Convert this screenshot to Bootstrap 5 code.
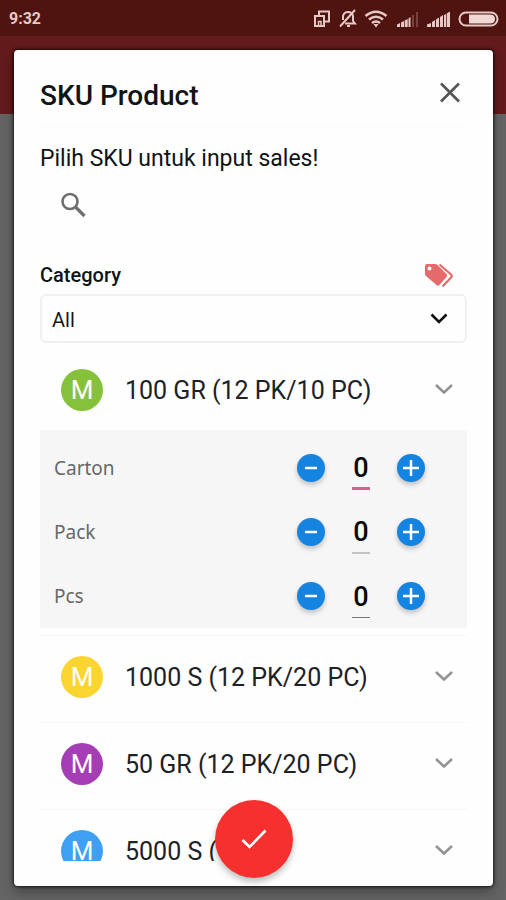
<!DOCTYPE html>
<html lang="id">
<head>
<meta charset="utf-8">
<meta name="viewport" content="width=device-width, initial-scale=1">
<title>SKU Product</title>
<link href="https://cdn.jsdelivr.net/npm/bootstrap@5.3.0/dist/css/bootstrap.min.css" rel="stylesheet">
<style>
  body { font-family: Roboto, "Liberation Sans", sans-serif; color: #101417; background: #646464; }
  .status-bar { height: 36px; background: #4f1410; color: #e6c9c5; font-size: 16px; font-weight: 700; padding: 2px 7px 0 9px; }
  .status-icons { gap: 7px; }
  .backdrop-area { background: linear-gradient(#621a1b 78px, #646464 78px); padding: 14px 13px 14px 14px; min-height: 0; }
  .sku-dialog { border-radius: 4px; background: #fefefe; box-shadow: 0 0 3px 1px #000000b0, 0 6px 12px #00000050; padding: 0 26px 25px; }
  .sku-head { height: 77px; padding: 16px 5px 0 0; border-bottom: 1px solid #fafafa; }
  .sku-title { font-size: 28px; line-height: 32px; font-weight: 500; }
  .intro { font-size: 23px; line-height: 28px; margin-top: 18px; }
  .search-row { height: 40px; margin: 12px 0 35px; padding-left: 20px; gap: 14px; }
  .search-input:focus { outline: none; }
  .cat-label { font-size: 20px; line-height: 24px; font-weight: 500; }
  .cat-row { height: 30px; margin-bottom: 4px; padding-right: 13px; }
  .cat-select { height: 49px; border: 2px solid #f0f0f0; border-radius: 6px; padding: 2px 10px 0; font-size: 20px; color: #15191c; background-color: #fefefe; background-size: 20px 20px; background-position: right 16px center;
    background-image: url("data:image/svg+xml,%3Csvg xmlns='http://www.w3.org/2000/svg' viewBox='0 0 20 20'%3E%3Cpath d='M2.500 5.500L10 13L17.500 5.500' fill='none' stroke='%23111' stroke-width='2.600'/%3E%3C/svg%3E"); }
  .sku-list { min-height: 0; }
  .sku-item { height: 87px; border: 0; border-top: 1px solid #f6f6f6; padding: 0 13px 4px 21px; gap: 22px; font-size: 25px; line-height: 32px; color: #1c2226; }
  .sku-item.open { padding-top: 7px; padding-bottom: 0; border-top: 0; }
  .sku-name { padding-top: 2px; }
  .sku-avatar { width: 42px; height: 42px; font-size: 26px; color: #fff; }
  .green { background: #86c13c; } .yellow { background: #fbd52f; } .purple { background: #a53db5; } .blue { background: #3f9ff0; }
  .qty-panel { background: #f6f6f6; padding: 6px 42px 0 14px; height: 198px; margin-bottom: 7px; }
  .qty-row { height: 64px; }
  .qty-label { font-family: "Noto Sans", sans-serif; font-size: 19px; color: #686868; }
  .qty-controls { gap: 27px; }
  .qty-btn { width: 28px; height: 28px; background: #1583e0; box-shadow: 0 3px 5px #00000038; }
  .qty-input { width: 18px; height: 44px; padding: 2px 0 0; border: 0; border-bottom: 2px solid #c4c4c4; background: transparent; font-size: 27px; font-weight: 500; color: #080808; text-align: center; }
  .qty-input:focus { outline: none; }
  .qty-input.active-line { border-bottom: 3px solid #d4628c; }
  .qty-input.dark-line { border-bottom: 1px solid #777; }
  .fab { width: 78px; height: 78px; bottom: 8px; left: 50%; transform: translateX(-50%); background: #f6302f; box-shadow: 0 4px 6px #00000040; }
</style>
</head>
<body class="vh-100 d-flex flex-column overflow-hidden">
<header class="status-bar d-flex align-items-center justify-content-between flex-shrink-0">
  <span>9:32</span>
  <div class="status-icons d-flex align-items-center">
    <svg width="18" height="20" viewBox="0 0 18 20" fill="none" stroke="#e6c9c5" stroke-width="2"><path d="M6 6V2.500h10v10h-4"/><path d="M2 7h9v10H2z"/><path d="M5.500 17v-4.500h2.500V17" stroke-width="1.500"/></svg>
    <svg width="19" height="20" viewBox="0 0 19 20" fill="none" stroke="#e6c9c5" stroke-width="2"><path d="M5 11V7q1-4 5-4 4 0 5 4v5l2 2.500H7"/><path d="M9 17h3M17 1L2 17.500"/></svg>
    <svg width="24" height="20" viewBox="0 0 24 20" fill="none" stroke="#e6c9c5" stroke-width="2.600"><path d="M1.500 7q10.500-8.500 21 0M5 10.500q7-5.500 14 0M8 14q4-3 8 0"/><path d="M9.500 15h5L12 18.500z" fill="#e6c9c5" stroke="none"/></svg>
    <svg width="24" height="20" viewBox="0 0 24 20" fill="#e6c9c5"><path d="M2 15.500L5 14v4H2zM6 13.500L9 12v6H6zM9.700 11.500l3-1.500v8h-3zM13.500 9.500L15.500 8v10h-2z"/><path d="M17 6h2v12h-2zM21 3h2v15h-2z" opacity=".25"/></svg>
    <svg width="25" height="20" viewBox="0 0 25 20" fill="#e6c9c5"><path d="M1 15.500L5 14v4H1zM6 13l3-2v7H6zM10 10.500l3-2V18h-3zM14 8l3-2v12h-3zM18 6l2-1v13h-2zM20.700 4.500L24 2.500V18h-3.300z"/></svg>
    <svg width="41" height="16" viewBox="0 0 41 16"><rect x="1.500" y="1.500" width="38" height="13" rx="6.500" fill="none" stroke="#e6c9c5" stroke-width="2"/><path d="M11 3.500h21q5 0 5 4.500t-5 4.500H11z" fill="#f0d8d3"/></svg>
  </div>
</header>
<main class="backdrop-area flex-grow-1 d-flex">
  <section class="sku-dialog position-relative flex-grow-1 d-flex flex-column" role="dialog" aria-labelledby="dialog-title">
    <div class="sku-head d-flex align-items-center justify-content-between flex-shrink-0">
      <h1 class="sku-title mb-0" id="dialog-title">SKU Product</h1>
      <button type="button" class="btn p-0 border-0 d-flex mb-2" aria-label="Tutup"><svg width="24" height="24" viewBox="0 0 24 24" stroke="#555" stroke-width="2.600"><path d="M3 3.500L21 21.500M21 3.500L3 21.500"/></svg></button>
    </div>
    <p class="intro mb-0">Pilih SKU untuk input sales!</p>
    <div class="search-row d-flex align-items-center flex-shrink-0">
      <svg width="26" height="26" viewBox="0 0 26 26" fill="none" stroke="#6e6e6e"><circle cx="10" cy="9.500" r="7.500" stroke-width="2.600"/><path d="M15.500 15L24.500 24" stroke-width="3.200"/></svg>
      <input type="search" class="search-input flex-grow-1 border-0 bg-transparent h-100" aria-label="Cari SKU">
    </div>
    <div class="cat-row d-flex align-items-center justify-content-between flex-shrink-0">
      <label class="cat-label" for="category">Category</label>
      <svg width="30" height="26" viewBox="0 0 30 26"><path fill="#e56a6c" fill-rule="evenodd" d="M1 4q0-2 2-2h8q1.500 0 2.500 1l9 9q1.500 1.500 0 3l-7 8q-1.500 1.500-3 0L2 14q-1-1-1-2zM5.500 4.500a2 2 0 1 0 0 4a2 2 0 0 0 0-4z"/><path d="M15.500 2.500L27 12.500q1.500 1.500 0 3L18.500 24.500" fill="none" stroke="#e56a6c" stroke-width="2.200"/></svg>
    </div>
    <select class="cat-select form-select flex-shrink-0" id="category"><option>All</option></select>
    <div class="sku-list flex-grow-1 overflow-hidden">
      <button type="button" class="sku-item open w-100 bg-transparent d-flex align-items-center text-start" aria-expanded="true" aria-controls="qty">
        <span class="sku-avatar green rounded-circle d-flex align-items-center justify-content-center">M</span><span class="sku-name flex-grow-1">100 GR (12 PK/10 PC)</span>
        <svg width="20" height="14" viewBox="0 0 20 14" fill="none" stroke="#929292" stroke-width="2.500"><path d="M2 2L10 9.500L18 2"/></svg>
      </button>
      <div class="qty-panel" id="qty">
        <div class="qty-row d-flex align-items-center justify-content-between">
          <label class="qty-label" for="q1">Carton</label>
          <div class="qty-controls d-flex align-items-center">
            <button type="button" class="qty-btn btn rounded-circle border-0 p-0 d-flex align-items-center justify-content-center" aria-label="Kurangi Carton"><svg width="20" height="20" viewBox="0 0 20 20" stroke="#fff" stroke-width="2.500"><path d="M4 10h12"/></svg></button>
            <input class="qty-input active-line" id="q1" type="text" inputmode="numeric" value="0">
            <button type="button" class="qty-btn btn rounded-circle border-0 p-0 d-flex align-items-center justify-content-center" aria-label="Tambah Carton"><svg width="20" height="20" viewBox="0 0 20 20" stroke="#fff" stroke-width="2.500"><path d="M2 10h16M10 2v16"/></svg></button>
          </div>
        </div>
        <div class="qty-row d-flex align-items-center justify-content-between">
          <label class="qty-label" for="q2">Pack</label>
          <div class="qty-controls d-flex align-items-center">
            <button type="button" class="qty-btn btn rounded-circle border-0 p-0 d-flex align-items-center justify-content-center" aria-label="Kurangi Pack"><svg width="20" height="20" viewBox="0 0 20 20" stroke="#fff" stroke-width="2.500"><path d="M4 10h12"/></svg></button>
            <input class="qty-input" id="q2" type="text" inputmode="numeric" value="0">
            <button type="button" class="qty-btn btn rounded-circle border-0 p-0 d-flex align-items-center justify-content-center" aria-label="Tambah Pack"><svg width="20" height="20" viewBox="0 0 20 20" stroke="#fff" stroke-width="2.500"><path d="M2 10h16M10 2v16"/></svg></button>
          </div>
        </div>
        <div class="qty-row d-flex align-items-center justify-content-between">
          <label class="qty-label" for="q3">Pcs</label>
          <div class="qty-controls d-flex align-items-center">
            <button type="button" class="qty-btn btn rounded-circle border-0 p-0 d-flex align-items-center justify-content-center" aria-label="Kurangi Pcs"><svg width="20" height="20" viewBox="0 0 20 20" stroke="#fff" stroke-width="2.500"><path d="M4 10h12"/></svg></button>
            <input class="qty-input dark-line" id="q3" type="text" inputmode="numeric" value="0">
            <button type="button" class="qty-btn btn rounded-circle border-0 p-0 d-flex align-items-center justify-content-center" aria-label="Tambah Pcs"><svg width="20" height="20" viewBox="0 0 20 20" stroke="#fff" stroke-width="2.500"><path d="M2 10h16M10 2v16"/></svg></button>
          </div>
        </div>
      </div>
      <button type="button" class="sku-item w-100 bg-transparent d-flex align-items-center text-start" aria-expanded="false">
        <span class="sku-avatar yellow rounded-circle d-flex align-items-center justify-content-center">M</span><span class="sku-name flex-grow-1">1000 S (12 PK/20 PC)</span>
        <svg width="20" height="14" viewBox="0 0 20 14" fill="none" stroke="#929292" stroke-width="2.500"><path d="M2 2L10 9.500L18 2"/></svg>
      </button>
      <button type="button" class="sku-item w-100 bg-transparent d-flex align-items-center text-start" aria-expanded="false">
        <span class="sku-avatar purple rounded-circle d-flex align-items-center justify-content-center">M</span><span class="sku-name flex-grow-1">50 GR (12 PK/20 PC)</span>
        <svg width="20" height="14" viewBox="0 0 20 14" fill="none" stroke="#929292" stroke-width="2.500"><path d="M2 2L10 9.500L18 2"/></svg>
      </button>
      <button type="button" class="sku-item w-100 bg-transparent d-flex align-items-center text-start" aria-expanded="false">
        <span class="sku-avatar blue rounded-circle d-flex align-items-center justify-content-center">M</span><span class="sku-name flex-grow-1">5000 S (</span>
        <svg width="20" height="14" viewBox="0 0 20 14" fill="none" stroke="#929292" stroke-width="2.500"><path d="M2 2L10 9.500L18 2"/></svg>
      </button>
    </div>
    <button type="button" class="fab btn rounded-circle border-0 p-0 position-absolute d-flex align-items-center justify-content-center" aria-label="Simpan"><svg width="26" height="22" viewBox="0 0 26 22" fill="none" stroke="#fff" stroke-width="2.600"><path d="M1.500 12L8.500 19L24.500 2.500"/></svg></button>
  </section>
</main>
<script src="https://cdn.jsdelivr.net/npm/bootstrap@5.3.0/dist/js/bootstrap.bundle.min.js"></script>
</body>
</html>
